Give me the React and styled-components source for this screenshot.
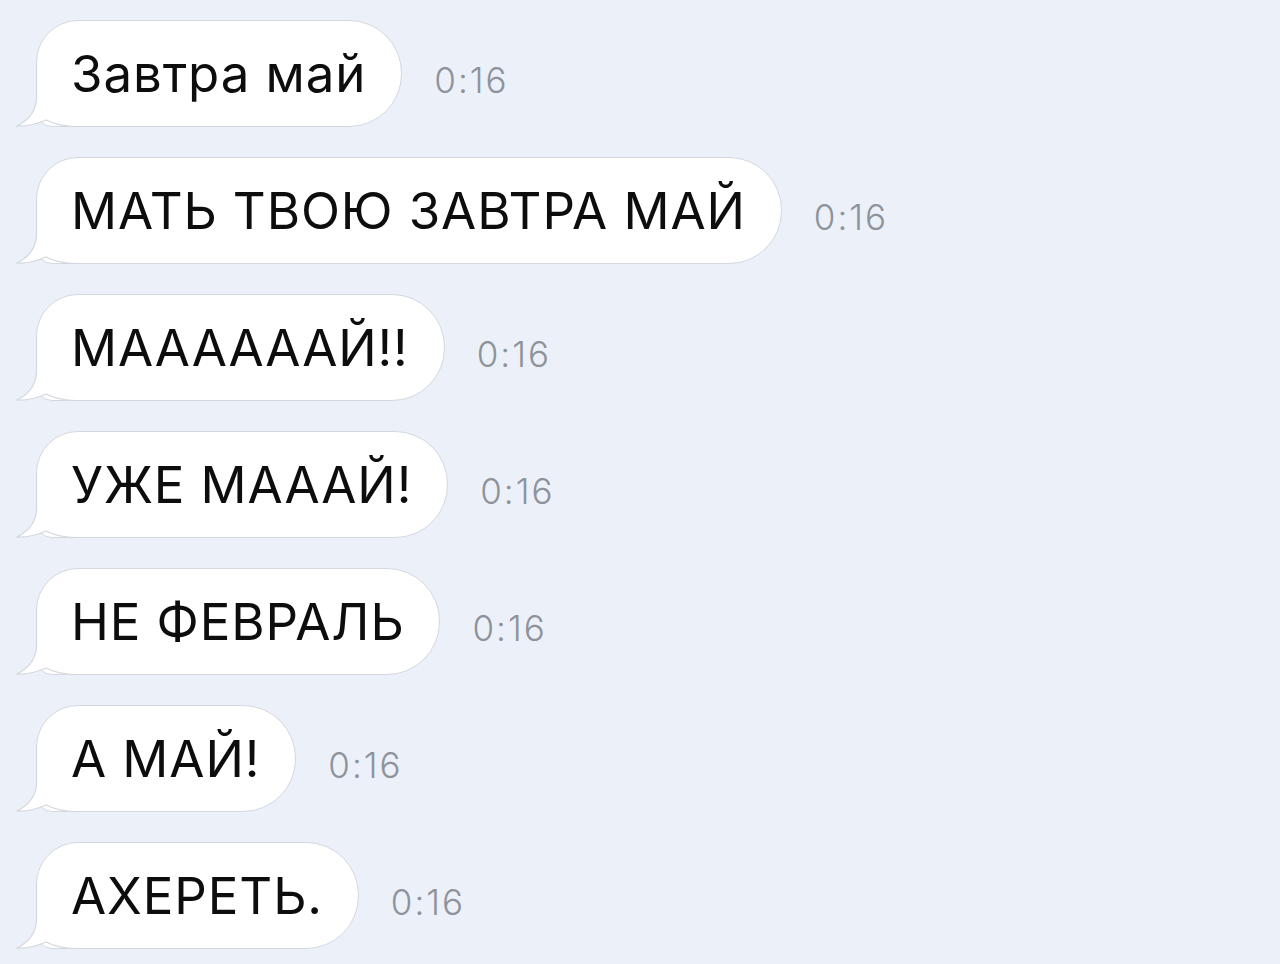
import React from 'react';
import styled, { createGlobalStyle } from 'styled-components';

const messages = [
  'Завтра май',
  'МАТЬ ТВОЮ ЗАВТРА МАЙ',
  'МААААААЙ!!',
  'УЖЕ МАААЙ!',
  'НЕ ФЕВРАЛЬ',
  'А МАЙ!',
  'АХЕРЕТЬ.',
];

const App = () => {
  return (
    <>
      <GlobalStyle />
      <Chat>
        {messages.map((text, i) => (
          <Row key={i}>
            <Bubble>
              <Tail width="60" height="64" viewBox="0 0 60 64">
                <path
                  d="M20.5,0 L20.5,34 C20.5,47 13,57 1,63 C10,63.5 20,61.5 30,57 C38,61 46,63.5 60,63.5 L60,0 Z"
                  fill="#fff"
                />
                <path
                  d="M20.5,0 L20.5,34 C20.5,47 13,57 1,63 C10,63.5 20,61.5 30,57 C38,61 46,63.5 60,63.5"
                  fill="none"
                  stroke="#d3d8df"
                  strokeWidth="1.2"
                />
              </Tail>
              <BubbleText>{text}</BubbleText>
            </Bubble>
            <Time>0:16</Time>
          </Row>
        ))}
      </Chat>
    </>
  );
};

export default App;

const GlobalStyle = createGlobalStyle`
  html, body {
    margin: 0;
    padding: 0;
    background: #ecf1f9;
  }
  body {
    width: 1280px;
    height: 964px;
    overflow: hidden;
  }
`;

const Chat = styled.div`
  display: flex;
  flex-direction: column;
  gap: 30px;
  padding: 20px 0 0 36px;
  font-family: Inter, "Liberation Sans", sans-serif;
`;

const Row = styled.div`
  display: flex;
  align-items: center;
  gap: 32px;
`;

const Bubble = styled.div`
  position: relative;
  display: flex;
  align-items: center;
  height: 105px;
  padding: 0 35px 0 34px;
  background: #fff;
  border: 1px solid #d3d8df;
  border-radius: 53px 53px 53px 16px;
  border-top-left-radius: 42px;
`;

const Tail = styled.svg`
  position: absolute;
  left: -21px;
  bottom: -1px;
  display: block;
`;

const BubbleText = styled.span`
  position: relative;
  font-size: 51px;
  letter-spacing: 0.9px;
  color: #0d0d0d;
  white-space: nowrap;
`;

const Time = styled.span`
  margin-top: 12px;
  font-size: 35px;
  font-weight: 300;
  letter-spacing: 2px;
  color: #8e939b;
`;
